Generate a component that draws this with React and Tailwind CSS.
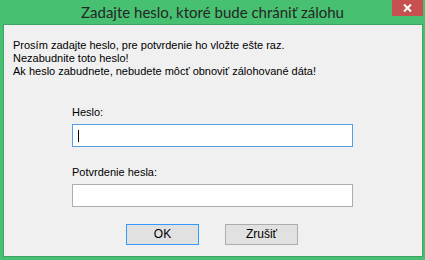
import React from "react";

export default function App() {
  return (
    <div className="w-[425px] h-[260px] bg-[#48c071] flex flex-col overflow-hidden">
      {/* Title bar */}
      <div className="relative h-[24px] shrink-0 flex items-center justify-center">
        <span
          className="text-[15px] leading-[24px] text-[#262626]"
          style={{ fontFamily: 'Lato, "Noto Sans", sans-serif' }}
        >
          Zadajte heslo, ktoré bude chrániť zálohu
        </span>
        <div className="absolute top-0 right-[2px] w-[31px] h-[16px] bg-[#c75050] flex items-center justify-center">
          <svg width="9" height="8" viewBox="0 0 9 8">
            <path d="M1 0.5 L8 7.5 M8 0.5 L1 7.5" stroke="#fff" strokeWidth="2" />
          </svg>
        </div>
      </div>

      {/* Client area */}
      <div
        className="ml-[3px] w-[420px] h-[233px] border border-[#3da563] bg-[#f0f0f0] pt-[14px] pl-[9px] text-[11px] leading-[13px] text-black"
        style={{ fontFamily: '"Liberation Sans", Arial, sans-serif' }}
      >
        <p>Prosím zadajte heslo, pre potvrdenie ho vložte ešte raz.</p>
        <p>Nezabudnite toto heslo!</p>
        <p>Ak heslo zabudnete, nebudete môcť obnoviť zálohované dáta!</p>

        <div className="ml-[59px] mt-[28px] w-[281px] flex flex-col">
          <label>Heslo:</label>
          <div className="mt-[5px] h-[23px] bg-white border border-[#569de5] flex items-center pl-[5px]">
            <div className="w-[1px] h-[12px] bg-black" />
          </div>
          <label className="mt-[19px]">Potvrdenie hesla:</label>
          <div className="mt-[5px] h-[23px] bg-white border border-[#adadad]" />
        </div>

        <div className="mt-[17px] ml-[113px] flex gap-[26px]">
          <button className="w-[73px] h-[21px] bg-[#e1e1e1] border border-[#3399ff] text-[12px] leading-[19px]">
            OK
          </button>
          <button className="w-[73px] h-[21px] bg-[#e1e1e1] border border-[#adadad] text-[12px] leading-[19px]">
            Zrušiť
          </button>
        </div>
      </div>
    </div>
  );
}
